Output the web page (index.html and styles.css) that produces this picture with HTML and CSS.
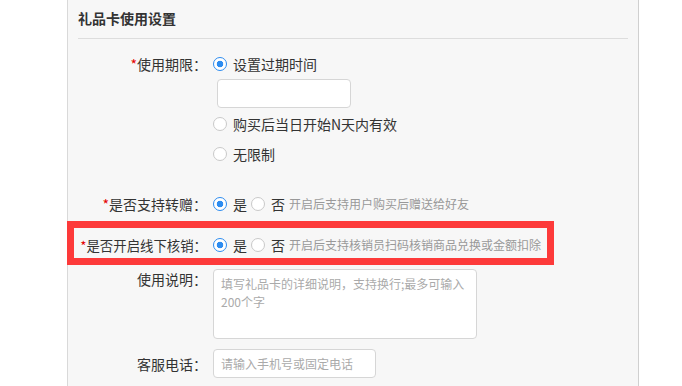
FILE: index.html
```html
<!DOCTYPE html>
<html lang="zh-CN">
<head>
    <meta charset="UTF-8">
    <meta name="viewport" content="width=device-width, initial-scale=1.0">
    <title>礼品卡使用设置</title>
    <link rel="stylesheet" href="styles.css">
</head>
<body>
    <div class="panel">
        <div class="panel-title">礼品卡使用设置</div>

        <div class="form">
            <!-- 使用期限 -->
            <div class="form-row">
                <label class="form-label"><i>*</i>使用期限：</label>
                <div class="form-field">
                    <label class="radio-line"><input type="radio" name="expire" checked><span>设置过期时间</span></label>
                    <input type="text" class="text-input date-input">
                    <label class="radio-line"><input type="radio" name="expire"><span>购买后当日开始N天内有效</span></label>
                    <label class="radio-line gap"><input type="radio" name="expire"><span>无限制</span></label>
                </div>
            </div>

            <!-- 转赠 -->
            <div class="form-row row-gift">
                <label class="form-label"><i>*</i>是否支持转赠：</label>
                <div class="form-field inline">
                    <label class="radio-line"><input type="radio" name="gift" checked><span>是</span></label>
                    <label class="radio-line next"><input type="radio" name="gift"><span>否</span></label>
                    <span class="hint">开启后支持用户购买后赠送给好友</span>
                </div>
            </div>

            <!-- 线下核销 -->
            <div class="form-row row-offline">
                <label class="form-label small"><i>*</i>是否开启线下核销：</label>
                <div class="form-field inline">
                    <label class="radio-line"><input type="radio" name="offline" checked><span>是</span></label>
                    <label class="radio-line next"><input type="radio" name="offline"><span>否</span></label>
                    <span class="hint">开启后支持核销员扫码核销商品兑换或金额扣除</span>
                </div>
                <div class="highlight"></div>
            </div>

            <!-- 使用说明 -->
            <div class="form-row row-desc">
                <label class="form-label">使用说明：</label>
                <div class="form-field">
                    <textarea class="text-area" placeholder="填写礼品卡的详细说明，支持换行;最多可输入200个字"></textarea>
                </div>
            </div>

            <!-- 客服电话 -->
            <div class="form-row row-phone">
                <label class="form-label">客服电话：</label>
                <div class="form-field">
                    <input type="text" class="text-input phone-input" placeholder="请输入手机号或固定电话">
                </div>
            </div>
        </div>
    </div>
</body>
</html>
```

FILE: styles.css
```css
* {
    box-sizing: border-box;
}
body {
    margin: 0;
    background-color: #fff;
    color: #333;
    font-family: "Noto Sans CJK SC", "Noto Sans", sans-serif;
}
.panel {
    margin-left: 67px;
    width: 572px;
    min-height: 386px;
    background-color: #f7f7f7;
    border-left: 1px solid #d9d9d9;
    border-right: 1px solid #d0d0d0;
    padding: 8px 10px 0;
}
.panel-title {
    font-size: 14px;
    font-weight: bold;
    line-height: 20px;
    padding-bottom: 10px;
    border-bottom: 1px solid #ddd;
}
.form {
    padding-top: 15px;
}
.form-row {
    display: flex;
    align-items: flex-start;
    font-size: 14px;
    line-height: 20px;
    position: relative;
}
.form-label {
    width: 129px;
    flex-shrink: 0;
    margin-right: 6px;
    text-align: right;
    white-space: nowrap;
}
.form-label.small {
    font-size: 13.4px;
}
.form-label i {
    font-style: normal;
    color: #e40000;
}
.form-field.inline {
    display: flex;
    align-items: center;
}
.radio-line {
    display: flex;
    align-items: center;
    height: 20px;
}
.radio-line.gap {
    margin-top: 10px;
}
.radio-line.next {
    margin-left: 4px;
}
.radio-line span {
    margin-left: 6px;
}
input[type="radio"] {
    appearance: none;
    -webkit-appearance: none;
    width: 14px;
    height: 14px;
    margin: 0;
    border: 1px solid #c9c9c9;
    border-radius: 50%;
    background-color: #fff;
}
input[type="radio"]:checked {
    border-color: #2d8cf0;
    background: radial-gradient(circle, #2d8cf0 0 3px, #fff 3.6px);
}
.hint {
    margin-left: 4px;
    font-size: 12px;
    color: #999;
}
.text-input,
.text-area {
    display: block;
    background-color: #fff;
    border: 1px solid #d6d6d6;
    border-radius: 4px;
    font-family: inherit;
    font-size: 12px;
    color: #333;
    outline: none;
}
.text-input::placeholder,
.text-area::placeholder {
    color: #aaa;
}
.date-input {
    width: 134px;
    height: 29px;
    margin: 5px 0 6px 4px;
}
.row-gift {
    margin-top: 30px;
}
.row-offline {
    margin-top: 21px;
}
.highlight {
    position: absolute;
    left: -11px;
    top: -14px;
    width: 487px;
    height: 44px;
    border: 7px solid #fd3a3a;
    pointer-events: none;
}
.row-desc {
    margin-top: 14px;
}
.text-area {
    width: 264px;
    height: 70px;
    padding: 5px 7px;
    line-height: 18px;
    resize: none;
}
.row-phone {
    margin-top: 10px;
    align-items: center;
}
.phone-input {
    width: 163px;
    height: 29px;
    padding: 0 7px;
}
```
